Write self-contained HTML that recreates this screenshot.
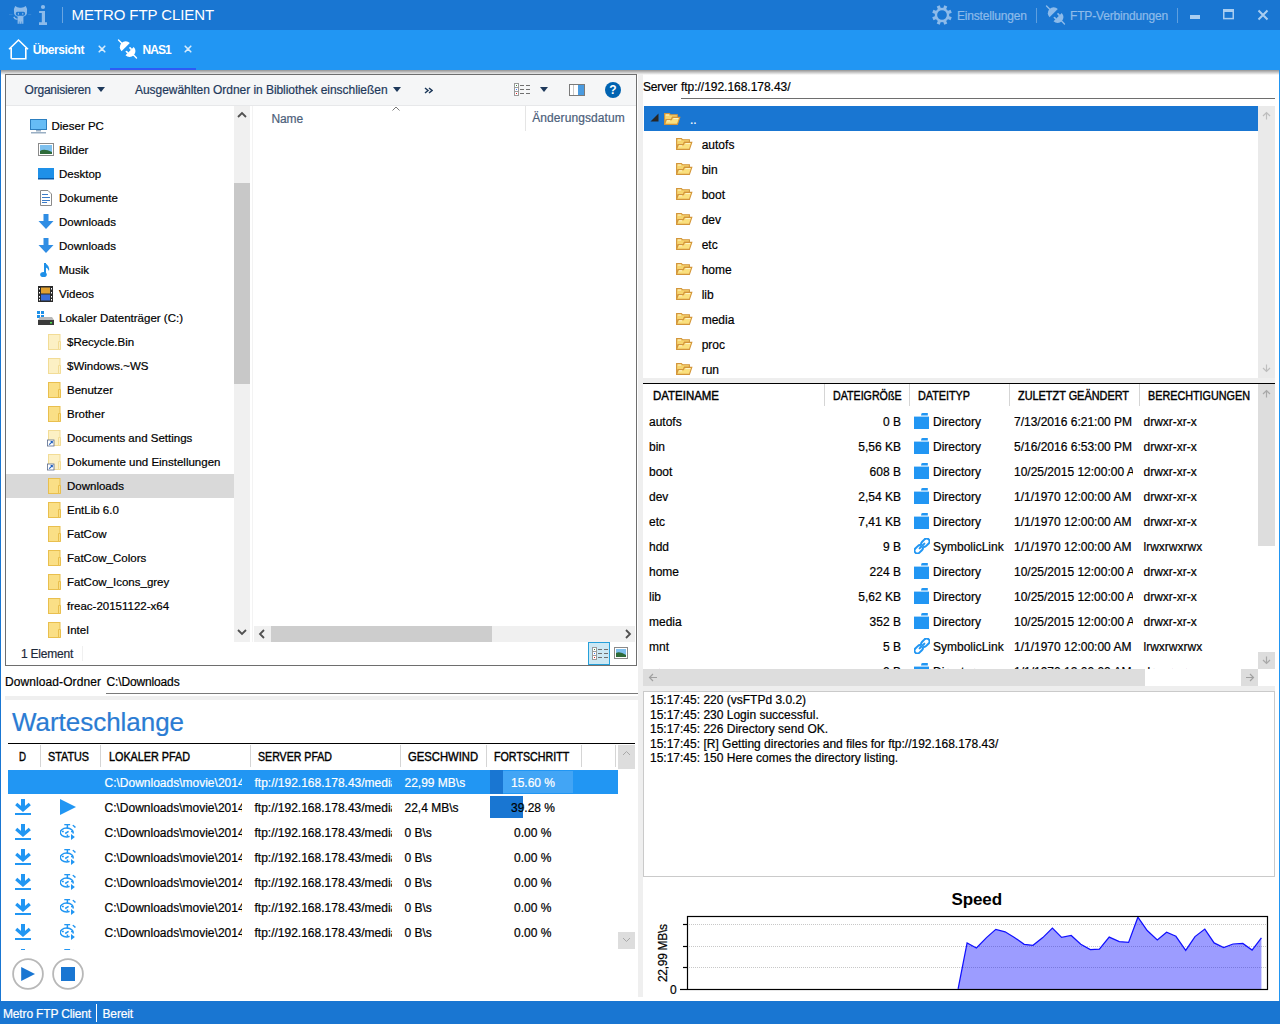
<!DOCTYPE html>
<html><head><meta charset="utf-8"><title>Metro FTP Client</title>
<style>
html,body{margin:0;padding:0;}
body{width:1280px;height:1024px;overflow:hidden;position:relative;background:#fff;font-family:"Liberation Sans",sans-serif;}
.t{position:absolute;white-space:nowrap;-webkit-text-stroke:0.2px currentColor;}
.r{position:absolute;}
</style></head><body>

<div class="r" style="left:0px;top:0px;width:1280px;height:30px;background:#1976D2;"></div>
<svg class="r" style="left:8px;top:2px;" width="44" height="26" viewBox="0 0 44 26"><g fill="#8DBBEA">
<path d="M6 9.6 Q5.6 6.4 7.2 4 Q9.4 5.9 12.5 5.7 Q15.6 5.9 17.8 4 Q19.4 6.4 19 9.6 Q19.6 15 12.5 15.2 Q5.4 15 6 9.6 Z"/>
<path d="M9.6 15 H15.4 V21.8 H14.1 V19.5 H13.6 V21.8 H11.4 V19.5 H10.9 V21.8 H9.6 Z"/>
<path d="M5.2 15.2 Q6.8 18.3 9.8 17.6 V16.6 Q7.5 17 6.3 14.6 Z"/>
<circle cx="35" cy="5" r="2.1"/>
<path d="M31.1 9.1 H37 V20.3 H39 V22.9 H31 V20.3 H33.8 V11.1 H31.1 Z"/>
</g>
<rect x="7.8" y="9.8" width="9.3" height="3.9" rx="1.6" fill="#1976D2"/>
<g fill="#8DBBEA"><ellipse cx="10.4" cy="11.8" rx="0.6" ry="1.1"/><ellipse cx="14.8" cy="11.8" rx="0.6" ry="1.1"/></g>
<path d="M1 12.6 H4.6 M20.2 12.6 H23.2" stroke="#8DBBEA" stroke-width="0.7" opacity="0.35"/></svg>
<div class="r" style="left:62px;top:7px;width:1px;height:16px;background:rgba(255,255,255,0.35);"></div>
<div class="t " style="left:71.5px;top:7px;font-size:15px;line-height:15px;color:#fff;letter-spacing:-0.088px;-webkit-text-stroke:0;">METRO FTP CLIENT</div>
<svg class="r" style="left:932px;top:5px;" width="20" height="20" viewBox="0 0 20 20"><g transform="translate(10,10)" fill="#8DBBEA"><rect x="-1.6" y="-9.9" width="3.2" height="4.5" transform="rotate(22.5)"/><rect x="-1.6" y="-9.9" width="3.2" height="4.5" transform="rotate(67.5)"/><rect x="-1.6" y="-9.9" width="3.2" height="4.5" transform="rotate(112.5)"/><rect x="-1.6" y="-9.9" width="3.2" height="4.5" transform="rotate(157.5)"/><rect x="-1.6" y="-9.9" width="3.2" height="4.5" transform="rotate(202.5)"/><rect x="-1.6" y="-9.9" width="3.2" height="4.5" transform="rotate(247.5)"/><rect x="-1.6" y="-9.9" width="3.2" height="4.5" transform="rotate(292.5)"/><rect x="-1.6" y="-9.9" width="3.2" height="4.5" transform="rotate(337.5)"/><circle r="6.05" fill="none" stroke="#8DBBEA" stroke-width="2.4"/></g></svg>
<div class="t " style="left:957px;top:10px;font-size:12px;line-height:12px;color:#8DBBEA;letter-spacing:-0.181px;">Einstellungen</div>
<div class="r" style="left:1036px;top:8px;width:1px;height:15px;background:rgba(255,255,255,0.3);"></div>
<svg class="r" style="left:1040px;top:0px;" width="32" height="30" viewBox="0 0 32 30"><g fill="#8DBBEA" transform="translate(15.5,15) rotate(45)">
<rect x="-13.4" y="-0.7" width="6" height="1.4" rx="0.7"/>
<path d="M-2.6 -5.85 A5.85 5.85 0 0 0 -2.6 5.85 Z"/>
<path d="M3 -5.85 A5.85 5.85 0 0 1 3 5.85 Z"/>
<rect x="0.2" y="-3.4" width="3.2" height="1.7" rx="0.8"/>
<rect x="0.2" y="1.7" width="3.2" height="1.7" rx="0.8"/>
<rect x="7.6" y="-0.7" width="5.8" height="1.4" rx="0.7"/>
</g></svg>
<div class="t " style="left:1070px;top:10px;font-size:12px;line-height:12px;color:#8DBBEA;letter-spacing:-0.171px;">FTP-Verbindungen</div>
<div class="r" style="left:1177px;top:8px;width:1px;height:15px;background:rgba(255,255,255,0.3);"></div>
<div class="r" style="left:1190px;top:15px;width:10px;height:4px;background:#A9CDF0;"></div>
<svg class="r" style="left:1223px;top:9px;" width="11" height="11" viewBox="0 0 11 11"><rect x="0.75" y="1" width="9.5" height="8.6" fill="none" stroke="#A9CDF0" stroke-width="1.5"/><rect x="0" y="0" width="11" height="3" fill="#A9CDF0"/></svg>
<svg class="r" style="left:1257px;top:9px;" width="12" height="12" viewBox="0 0 12 12"><path d="M1.5 1.5 L10.5 10.5 M10.5 1.5 L1.5 10.5" stroke="#A9CDF0" stroke-width="2"/></svg>
<div class="r" style="left:0px;top:30px;width:1280px;height:40px;background:#2196F3;"></div>
<svg class="r" style="left:8px;top:38px;" width="21" height="22" viewBox="0 0 21 22"><path d="M3.2 20.8 V10 M17.8 10 V20.8 H3.2 M1 11.2 L10.5 2 L20 11.2" fill="none" stroke="#fff" stroke-width="1.6"/></svg>
<div class="t " style="left:32.8px;top:44px;font-size:12px;line-height:12px;color:#fff;font-weight:bold;-webkit-text-stroke:0;letter-spacing:-0.461px;">Übersicht</div>
<svg class="r" style="left:98px;top:45px;" width="8" height="8" viewBox="0 0 8 8"><path d="M1.2 1.2 L6.8 6.8 M6.8 1.2 L1.2 6.8" stroke="#D6EBFC" stroke-width="1.6" stroke-linecap="round"/></svg>
<svg class="r" style="left:112px;top:34px;" width="32" height="30" viewBox="0 0 32 30"><g fill="#fff" transform="translate(15.5,15) rotate(45)">
<rect x="-13.4" y="-0.7" width="6" height="1.4" rx="0.7"/>
<path d="M-2.6 -5.85 A5.85 5.85 0 0 0 -2.6 5.85 Z"/>
<path d="M3 -5.85 A5.85 5.85 0 0 1 3 5.85 Z"/>
<rect x="0.2" y="-3.4" width="3.2" height="1.7" rx="0.8"/>
<rect x="0.2" y="1.7" width="3.2" height="1.7" rx="0.8"/>
<rect x="7.6" y="-0.7" width="5.8" height="1.4" rx="0.7"/>
</g></svg>
<div class="t " style="left:142.5px;top:44px;font-size:12px;line-height:12px;color:#fff;font-weight:bold;-webkit-text-stroke:0;letter-spacing:-0.978px;">NAS1</div>
<svg class="r" style="left:184px;top:45px;" width="8" height="8" viewBox="0 0 8 8"><path d="M1.2 1.2 L6.8 6.8 M6.8 1.2 L1.2 6.8" stroke="#D6EBFC" stroke-width="1.6" stroke-linecap="round"/></svg>
<div class="r" style="left:110px;top:68px;width:86px;height:2px;background:#2D5BF5;"></div>
<div class="r" style="left:0px;top:70px;width:1px;height:931px;background:#1976D2;"></div>
<div class="r" style="left:1279px;top:70px;width:1px;height:931px;background:#2196F3;"></div>
<div class="r" style="left:1px;top:70px;width:1278px;height:5px;background:linear-gradient(rgba(0,0,0,0.42),rgba(0,0,0,0));"></div>
<div class="r" style="left:638px;top:74px;width:5px;height:923px;background:#EFEFEF;"></div>
<div class="r" style="left:5px;top:696px;width:633px;height:4px;background:#EFEFEF;"></div>
<div class="r" style="left:5px;top:74px;width:632px;height:592px;background:#fff;box-sizing:border-box;border:1px solid #6E6E6E;"></div>
<div class="r" style="left:6px;top:75px;width:630px;height:30px;background:#F5F6F7;"></div>
<div class="r" style="left:6px;top:105px;width:630px;height:1px;background:#E7E8EA;"></div>
<div class="t " style="left:24.6px;top:84px;font-size:12px;line-height:12px;color:#1E395B;letter-spacing:-0.225px;">Organisieren</div>
<svg class="r" style="left:97px;top:87px;" width="8" height="5" viewBox="0 0 8 5"><path d="M0 0 H8 L4 5 Z" fill="#1E395B"/></svg>
<div class="t " style="left:135px;top:84px;font-size:12px;line-height:12px;color:#1E395B;letter-spacing:-0.050px;">Ausgewählten Ordner in Bibliothek einschließen</div>
<svg class="r" style="left:393px;top:87px;" width="8" height="5" viewBox="0 0 8 5"><path d="M0 0 H8 L4 5 Z" fill="#1E395B"/></svg>
<svg class="r" style="left:424px;top:87px;" width="9" height="7" viewBox="0 0 9 7"><path d="M1 1 L4 3.5 L1 6 M5 1 L8 3.5 L5 6" fill="none" stroke="#1E395B" stroke-width="1.5"/></svg>
<svg class="r" style="left:514px;top:83px;" width="16" height="13" viewBox="0 0 16 13"><g fill="#fff" stroke="#9A9A9A" stroke-width="1"><rect x="0.5" y="0.5" width="4" height="4"/><rect x="0.5" y="4.5" width="4" height="4"/><rect x="0.5" y="8.5" width="4" height="4"/></g>
<rect x="2" y="2" width="1" height="1" fill="#3C8C3C"/><rect x="2" y="6" width="1" height="1" fill="#3C7CFC"/><rect x="2" y="10" width="1" height="1" fill="#E02020"/>
<g fill="#707070"><rect x="6" y="2" width="4" height="1"/><rect x="12" y="2" width="4" height="1"/><rect x="6" y="6" width="4" height="1"/><rect x="12" y="6" width="4" height="1"/><rect x="6" y="10" width="4" height="1"/><rect x="12" y="10" width="4" height="1"/></g></svg>
<svg class="r" style="left:540px;top:87px;" width="8" height="5" viewBox="0 0 8 5"><path d="M0 0 H8 L4 5 Z" fill="#1E395B"/></svg>
<svg class="r" style="left:569px;top:84px;" width="16" height="12" viewBox="0 0 16 12"><rect x="0.5" y="0.5" width="15" height="11" fill="#fff" stroke="#7A7A7A"/><rect x="4" y="1" width="1" height="10" fill="#C8C8C8"/><rect x="9" y="1" width="6" height="10" fill="#4A9BE0"/></svg>
<svg class="r" style="left:605px;top:82px;" width="16" height="16" viewBox="0 0 16 16"><circle cx="8" cy="8" r="8" fill="#0063B1"/><text x="8" y="12.3" text-anchor="middle" font-family="Liberation Sans" font-weight="bold" font-size="12" fill="#fff">?</text></svg>
<div class="r" style="left:6px;top:474px;width:228px;height:24px;background:#D9D9D9;"></div>
<svg class="r" style="left:30px;top:118px;" width="17" height="16" viewBox="0 0 17 16"><rect x="0.5" y="1.5" width="16" height="10" fill="#3AA0E8" stroke="#2C7FC0" stroke-width="1"/><rect x="1" y="2" width="15" height="9" fill="#66BCF5"/><rect x="6" y="12" width="5" height="1.5" fill="#9AAFC4"/><rect x="1" y="14" width="15" height="1.5" fill="#9AAFC4"/></svg>
<div class="t " style="left:51.5px;top:121px;font-size:11.5px;line-height:11.5px;color:#000;">Dieser PC</div>
<svg class="r" style="left:38px;top:143px;" width="16" height="14" viewBox="0 0 16 14"><rect x="0.5" y="0.5" width="15" height="12" fill="#fff" stroke="#8A8A8A"/><rect x="2" y="2" width="12" height="9" fill="#7EC0EE"/><path d="M2 8 Q6 5 14 9 V11 H2 Z" fill="#2E6B3A"/></svg>
<div class="t " style="left:59px;top:145px;font-size:11.5px;line-height:11.5px;color:#000;">Bilder</div>
<svg class="r" style="left:38px;top:167px;" width="16" height="14" viewBox="0 0 16 14"><rect x="0" y="1" width="16" height="11" fill="#1E90E8"/><rect x="0" y="11" width="16" height="1.5" fill="#0A5AA8"/></svg>
<div class="t " style="left:59px;top:169px;font-size:11.5px;line-height:11.5px;color:#000;">Desktop</div>
<svg class="r" style="left:40px;top:190px;" width="12" height="16" viewBox="0 0 12 16"><path d="M0.5 0.5 H8 L11.5 4 V15.5 H0.5 Z" fill="#fff" stroke="#8A8A8A"/><g fill="#3C7CC8"><rect x="2" y="4" width="6" height="1"/><rect x="2" y="7" width="8" height="1"/><rect x="2" y="10" width="8" height="1"/><rect x="2" y="12" width="5" height="1"/></g></svg>
<div class="t " style="left:59px;top:193px;font-size:11.5px;line-height:11.5px;color:#000;">Dokumente</div>
<svg class="r" style="left:38px;top:214px;" width="16" height="16" viewBox="0 0 16 16"><path d="M5.5 0 H10.5 V7 H15.5 L8 15 L0.5 7 H5.5 Z" fill="#2F8DE4"/></svg>
<div class="t " style="left:59px;top:217px;font-size:11.5px;line-height:11.5px;color:#000;">Downloads</div>
<svg class="r" style="left:38px;top:238px;" width="16" height="16" viewBox="0 0 16 16"><path d="M5.5 0 H10.5 V7 H15.5 L8 15 L0.5 7 H5.5 Z" fill="#2F8DE4"/></svg>
<div class="t " style="left:59px;top:241px;font-size:11.5px;line-height:11.5px;color:#000;">Downloads</div>
<svg class="r" style="left:40px;top:262px;" width="12" height="16" viewBox="0 0 12 16"><path d="M5 1 V12" stroke="#1E90E8" stroke-width="2"/><ellipse cx="3.5" cy="12.5" rx="3.3" ry="2.6" fill="#1E90E8"/><path d="M5 1 Q10 4 9 9 Q8 6 5 5 Z" fill="#1E90E8"/></svg>
<div class="t " style="left:59px;top:265px;font-size:11.5px;line-height:11.5px;color:#000;">Musik</div>
<svg class="r" style="left:38px;top:286px;" width="15" height="16" viewBox="0 0 15 16"><rect x="0" y="0" width="15" height="16" fill="#2A2A2A"/><rect x="3" y="1.5" width="9" height="6" fill="#E0A030"/><rect x="3" y="8.5" width="9" height="6" fill="#3A6ED8"/><g fill="#fff"><rect x="1" y="2" width="1" height="1.5"/><rect x="1" y="6" width="1" height="1.5"/><rect x="1" y="10" width="1" height="1.5"/><rect x="1" y="13" width="1" height="1.5"/><rect x="13" y="2" width="1" height="1.5"/><rect x="13" y="6" width="1" height="1.5"/><rect x="13" y="10" width="1" height="1.5"/><rect x="13" y="13" width="1" height="1.5"/></g></svg>
<div class="t " style="left:59px;top:289px;font-size:11.5px;line-height:11.5px;color:#000;">Videos</div>
<svg class="r" style="left:37px;top:310px;" width="17" height="16" viewBox="0 0 17 16"><g fill="#1E90E8"><rect x="0" y="1" width="3" height="3"/><rect x="4" y="1" width="3" height="3"/><rect x="0" y="5" width="3" height="3"/><rect x="4" y="5" width="3" height="3"/></g><path d="M1 10 L3 7 H15 L17 10 Z" fill="#B8B8B8"/><rect x="1" y="10" width="16" height="5" fill="#3A3A3A"/><rect x="13" y="12" width="2" height="1.5" fill="#4CE04C"/></svg>
<div class="t " style="left:59px;top:313px;font-size:11.5px;line-height:11.5px;color:#000;">Lokaler Datenträger (C:)</div>
<svg class="r" style="left:48px;top:334px;overflow:visible;" width="14" height="17" viewBox="0 0 14 17"><rect x="0.5" y="0.5" width="11.5" height="15" fill="#FCF0C4" stroke="#F2DC96" stroke-width="1"/><path d="M12.5 7.5 H10.5 V15.5 H12.5 Z" fill="#FCF0C4" stroke="#F2DC96" stroke-width="1"/></svg>
<div class="t " style="left:67px;top:337px;font-size:11.5px;line-height:11.5px;color:#000;">$Recycle.Bin</div>
<svg class="r" style="left:48px;top:358px;overflow:visible;" width="14" height="17" viewBox="0 0 14 17"><rect x="0.5" y="0.5" width="11.5" height="15" fill="#FCF0C4" stroke="#F2DC96" stroke-width="1"/><path d="M12.5 7.5 H10.5 V15.5 H12.5 Z" fill="#FCF0C4" stroke="#F2DC96" stroke-width="1"/></svg>
<div class="t " style="left:67px;top:361px;font-size:11.5px;line-height:11.5px;color:#000;">$Windows.~WS</div>
<svg class="r" style="left:48px;top:382px;overflow:visible;" width="14" height="17" viewBox="0 0 14 17"><rect x="0.5" y="0.5" width="11.5" height="15" fill="#FADF86" stroke="#E9BF4E" stroke-width="1"/><path d="M12.5 7.5 H10.5 V15.5 H12.5 Z" fill="#FADF86" stroke="#E9BF4E" stroke-width="1"/></svg>
<div class="t " style="left:67px;top:385px;font-size:11.5px;line-height:11.5px;color:#000;">Benutzer</div>
<svg class="r" style="left:48px;top:406px;overflow:visible;" width="14" height="17" viewBox="0 0 14 17"><rect x="0.5" y="0.5" width="11.5" height="15" fill="#FADF86" stroke="#E9BF4E" stroke-width="1"/><path d="M12.5 7.5 H10.5 V15.5 H12.5 Z" fill="#FADF86" stroke="#E9BF4E" stroke-width="1"/></svg>
<div class="t " style="left:67px;top:409px;font-size:11.5px;line-height:11.5px;color:#000;">Brother</div>
<svg class="r" style="left:48px;top:430px;overflow:visible;" width="14" height="17" viewBox="0 0 14 17"><rect x="0.5" y="0.5" width="11.5" height="15" fill="#FCF0C4" stroke="#F2DC96" stroke-width="1"/><path d="M12.5 7.5 H10.5 V15.5 H12.5 Z" fill="#FCF0C4" stroke="#F2DC96" stroke-width="1"/><rect x="-0.5" y="10" width="6.5" height="6" fill="#fff" stroke="#5A6A8A" stroke-width="0.8"/><path d="M1.2 14.6 L4 11.8 M2.6 11.5 H4.3 V13.2" stroke="#1C5FC0" stroke-width="1.1" fill="none"/></svg>
<div class="t " style="left:67px;top:433px;font-size:11.5px;line-height:11.5px;color:#000;">Documents and Settings</div>
<svg class="r" style="left:48px;top:454px;overflow:visible;" width="14" height="17" viewBox="0 0 14 17"><rect x="0.5" y="0.5" width="11.5" height="15" fill="#FCF0C4" stroke="#F2DC96" stroke-width="1"/><path d="M12.5 7.5 H10.5 V15.5 H12.5 Z" fill="#FCF0C4" stroke="#F2DC96" stroke-width="1"/><rect x="-0.5" y="10" width="6.5" height="6" fill="#fff" stroke="#5A6A8A" stroke-width="0.8"/><path d="M1.2 14.6 L4 11.8 M2.6 11.5 H4.3 V13.2" stroke="#1C5FC0" stroke-width="1.1" fill="none"/></svg>
<div class="t " style="left:67px;top:457px;font-size:11.5px;line-height:11.5px;color:#000;">Dokumente und Einstellungen</div>
<svg class="r" style="left:48px;top:478px;overflow:visible;" width="14" height="17" viewBox="0 0 14 17"><rect x="0.5" y="0.5" width="11.5" height="15" fill="#FADF86" stroke="#E9BF4E" stroke-width="1"/><path d="M12.5 7.5 H10.5 V15.5 H12.5 Z" fill="#FADF86" stroke="#E9BF4E" stroke-width="1"/></svg>
<div class="t " style="left:67px;top:481px;font-size:11.5px;line-height:11.5px;color:#000;">Downloads</div>
<svg class="r" style="left:48px;top:502px;overflow:visible;" width="14" height="17" viewBox="0 0 14 17"><rect x="0.5" y="0.5" width="11.5" height="15" fill="#FADF86" stroke="#E9BF4E" stroke-width="1"/><path d="M12.5 7.5 H10.5 V15.5 H12.5 Z" fill="#FADF86" stroke="#E9BF4E" stroke-width="1"/></svg>
<div class="t " style="left:67px;top:505px;font-size:11.5px;line-height:11.5px;color:#000;">EntLib 6.0</div>
<svg class="r" style="left:48px;top:526px;overflow:visible;" width="14" height="17" viewBox="0 0 14 17"><rect x="0.5" y="0.5" width="11.5" height="15" fill="#FADF86" stroke="#E9BF4E" stroke-width="1"/><path d="M12.5 7.5 H10.5 V15.5 H12.5 Z" fill="#FADF86" stroke="#E9BF4E" stroke-width="1"/></svg>
<div class="t " style="left:67px;top:529px;font-size:11.5px;line-height:11.5px;color:#000;">FatCow</div>
<svg class="r" style="left:48px;top:550px;overflow:visible;" width="14" height="17" viewBox="0 0 14 17"><rect x="0.5" y="0.5" width="11.5" height="15" fill="#FADF86" stroke="#E9BF4E" stroke-width="1"/><path d="M12.5 7.5 H10.5 V15.5 H12.5 Z" fill="#FADF86" stroke="#E9BF4E" stroke-width="1"/></svg>
<div class="t " style="left:67px;top:553px;font-size:11.5px;line-height:11.5px;color:#000;">FatCow_Colors</div>
<svg class="r" style="left:48px;top:574px;overflow:visible;" width="14" height="17" viewBox="0 0 14 17"><rect x="0.5" y="0.5" width="11.5" height="15" fill="#FADF86" stroke="#E9BF4E" stroke-width="1"/><path d="M12.5 7.5 H10.5 V15.5 H12.5 Z" fill="#FADF86" stroke="#E9BF4E" stroke-width="1"/></svg>
<div class="t " style="left:67px;top:577px;font-size:11.5px;line-height:11.5px;color:#000;">FatCow_Icons_grey</div>
<svg class="r" style="left:48px;top:598px;overflow:visible;" width="14" height="17" viewBox="0 0 14 17"><rect x="0.5" y="0.5" width="11.5" height="15" fill="#FADF86" stroke="#E9BF4E" stroke-width="1"/><path d="M12.5 7.5 H10.5 V15.5 H12.5 Z" fill="#FADF86" stroke="#E9BF4E" stroke-width="1"/></svg>
<div class="t " style="left:67px;top:601px;font-size:11.5px;line-height:11.5px;color:#000;">freac-20151122-x64</div>
<svg class="r" style="left:48px;top:622px;overflow:visible;" width="14" height="17" viewBox="0 0 14 17"><rect x="0.5" y="0.5" width="11.5" height="15" fill="#FADF86" stroke="#E9BF4E" stroke-width="1"/><path d="M12.5 7.5 H10.5 V15.5 H12.5 Z" fill="#FADF86" stroke="#E9BF4E" stroke-width="1"/></svg>
<div class="t " style="left:67px;top:625px;font-size:11.5px;line-height:11.5px;color:#000;">Intel</div>
<div class="r" style="left:234px;top:106px;width:16px;height:536px;background:#F0F0F0;"></div>
<div class="r" style="left:234px;top:183px;width:16px;height:201px;background:#C8C8C8;"></div>
<svg class="r" style="left:237px;top:111px;" width="10" height="7" viewBox="0 0 10 7"><path d="M1 6 L5 2 L9 6" fill="none" stroke="#505050" stroke-width="1.8"/></svg>
<svg class="r" style="left:237px;top:629px;" width="10" height="7" viewBox="0 0 10 7"><path d="M1 1 L5 5 L9 1" fill="none" stroke="#505050" stroke-width="1.8"/></svg>
<div class="r" style="left:252px;top:106px;width:1px;height:536px;background:#F3F3F3;"></div>
<div class="t " style="left:271.5px;top:113px;font-size:12px;line-height:12px;color:#4C607A;letter-spacing:-0.128px;">Name</div>
<svg class="r" style="left:392px;top:105px;" width="8" height="6" viewBox="0 0 8 6"><path d="M0.5 5.5 L4 2 L7.5 5.5" fill="none" stroke="#7A7A7A" stroke-width="1"/></svg>
<div class="r" style="left:525px;top:106px;width:1px;height:25px;background:#E5E5E5;"></div>
<div class="t " style="left:532.3px;top:112px;font-size:12px;line-height:12px;color:#4C607A;letter-spacing:0.072px;">Änderungsdatum</div>
<div class="r" style="left:254px;top:626px;width:381px;height:16px;background:#F0F0F0;"></div>
<div class="r" style="left:271px;top:626px;width:221px;height:16px;background:#CDCDCD;"></div>
<svg class="r" style="left:258px;top:629px;" width="8" height="10" viewBox="0 0 8 10"><path d="M6 1 L2 5 L6 9" fill="none" stroke="#505050" stroke-width="1.8"/></svg>
<svg class="r" style="left:624px;top:629px;" width="8" height="10" viewBox="0 0 8 10"><path d="M2 1 L6 5 L2 9" fill="none" stroke="#505050" stroke-width="1.8"/></svg>
<div class="t " style="left:21px;top:648px;font-size:12px;line-height:12px;color:#1E2A3A;letter-spacing:-0.226px;">1 Element</div>
<div class="r" style="left:82px;top:646px;width:1px;height:15px;background:#F0F0F0;"></div>
<div class="r" style="left:588px;top:642px;width:22px;height:23px;background:#CCE8F4;box-sizing:border-box;border:1px solid #26A0DA;"></div>
<svg class="r" style="left:592px;top:647px;" width="16" height="13" viewBox="0 0 16 13"><g fill="#fff" stroke="#9A9A9A" stroke-width="1"><rect x="0.5" y="0.5" width="4" height="4"/><rect x="0.5" y="4.5" width="4" height="4"/><rect x="0.5" y="8.5" width="4" height="4"/></g>
<rect x="2" y="2" width="1" height="1" fill="#3C8C3C"/><rect x="2" y="6" width="1" height="1" fill="#3C7CFC"/><rect x="2" y="10" width="1" height="1" fill="#E02020"/>
<g fill="#707070"><rect x="6" y="2" width="4" height="1"/><rect x="12" y="2" width="4" height="1"/><rect x="6" y="6" width="4" height="1"/><rect x="12" y="6" width="4" height="1"/><rect x="6" y="10" width="4" height="1"/><rect x="12" y="10" width="4" height="1"/></g></svg>
<svg class="r" style="left:614px;top:647px;" width="14" height="12" viewBox="0 0 14 12"><rect x="0.5" y="0.5" width="13" height="11" fill="#fff" stroke="#8A8A8A"/><rect x="2" y="2" width="10" height="8" fill="#7EC0EE"/><path d="M2 6 Q6 4 12 8 V10 H2 Z" fill="#2E6B3A"/></svg>
<div class="t " style="left:5px;top:676px;font-size:12px;line-height:12px;color:#000;letter-spacing:0.086px;">Download-Ordner</div>
<div class="t " style="left:106.5px;top:676px;font-size:12px;line-height:12px;color:#000;letter-spacing:-0.142px;">C:\Downloads</div>
<div class="r" style="left:106px;top:693px;width:532px;height:1px;background:#7A7A7A;"></div>
<div class="t " style="left:12px;top:709px;font-size:26px;line-height:26px;color:#2B7CD3;letter-spacing:-0.035px;">Warteschlange</div>
<div class="r" style="left:8px;top:743px;width:627px;height:1px;background:#000;"></div>
<div class="t " style="left:18.5px;top:751px;font-size:12px;line-height:12px;color:#000;transform:scaleX(0.8077);transform-origin:0 0;-webkit-text-stroke:0.4px #000;">D</div>
<div class="t " style="left:48px;top:751px;font-size:12px;line-height:12px;color:#000;transform:scaleX(0.8999);transform-origin:0 0;-webkit-text-stroke:0.4px #000;">STATUS</div>
<div class="t " style="left:108.5px;top:751px;font-size:12px;line-height:12px;color:#000;transform:scaleX(0.8996);transform-origin:0 0;-webkit-text-stroke:0.4px #000;">LOKALER PFAD</div>
<div class="t " style="left:258px;top:751px;font-size:12px;line-height:12px;color:#000;transform:scaleX(0.8829);transform-origin:0 0;-webkit-text-stroke:0.4px #000;">SERVER PFAD</div>
<div class="t " style="left:408px;top:751px;font-size:12px;line-height:12px;color:#000;transform:scaleX(0.9375);transform-origin:0 0;-webkit-text-stroke:0.4px #000;">GESCHWIND</div>
<div class="t " style="left:494.3px;top:751px;font-size:12px;line-height:12px;color:#000;transform:scaleX(0.8917);transform-origin:0 0;-webkit-text-stroke:0.4px #000;">FORTSCHRITT</div>
<div class="r" style="left:40px;top:745px;width:1px;height:22px;background:#D5D5D5;"></div>
<div class="r" style="left:100px;top:745px;width:1px;height:22px;background:#D5D5D5;"></div>
<div class="r" style="left:250px;top:745px;width:1px;height:22px;background:#D5D5D5;"></div>
<div class="r" style="left:400px;top:745px;width:1px;height:22px;background:#D5D5D5;"></div>
<div class="r" style="left:486px;top:745px;width:1px;height:22px;background:#D5D5D5;"></div>
<div class="r" style="left:581px;top:745px;width:1px;height:22px;background:#D5D5D5;"></div>
<div class="r" style="left:615px;top:745px;width:1px;height:22px;background:#D5D5D5;"></div>
<div class="r" style="left:618px;top:745px;width:17px;height:24px;background:#DDDDDD;"></div>
<svg class="r" style="left:622px;top:750px;" width="9" height="6" viewBox="0 0 9 6"><path d="M1 5 L4.5 1.5 L8 5" fill="none" stroke="#A8A8A8" stroke-width="1"/></svg>
<div class="r" style="left:618px;top:932px;width:17px;height:17px;background:#DDDDDD;"></div>
<svg class="r" style="left:622px;top:937px;" width="9" height="6" viewBox="0 0 9 6"><path d="M1 1 L4.5 4.5 L8 1" fill="none" stroke="#A8A8A8" stroke-width="1"/></svg>
<div class="r" style="left:8px;top:770px;width:610px;height:24px;background:#2196F3;"></div>
<div class="r" style="left:490px;top:770px;width:13px;height:24px;background:#1976D2;"></div>
<div class="r" style="left:503px;top:771px;width:70px;height:22px;background:#42A5F5;"></div>
<div class="r" style="left:104px;top:770px;width:138px;height:25px;overflow:hidden;">
<div class="t " style="left:0.5px;top:7px;font-size:12px;line-height:12px;color:#fff;">C:\Downloads\movie\2014</div>
</div>
<div class="r" style="left:254px;top:770px;width:138px;height:25px;overflow:hidden;">
<div class="t " style="left:0.5px;top:7px;font-size:12px;line-height:12px;color:#fff;">ftp://192.168.178.43/media</div>
</div>
<div class="t " style="left:404.5px;top:777px;font-size:12px;line-height:12px;color:#fff;">22,99 MB\s</div>
<div class="t " style="left:511px;top:777px;font-size:12px;line-height:12px;color:#fff;">15.60 %</div>
<svg class="r" style="left:15px;top:799px;" width="16" height="16" viewBox="0 0 16 16"><rect x="6" y="0" width="4" height="10" fill="#2196F3"/><path d="M1.2 5 L8 10.8 L14.8 5" fill="none" stroke="#2196F3" stroke-width="3.2"/><rect x="0" y="14" width="16" height="2" fill="#2196F3"/></svg>
<svg class="r" style="left:60px;top:799px;" width="16" height="16" viewBox="0 0 16 16"><path d="M0 0 L16 8 L0 16 Z" fill="#2196F3"/></svg>
<div class="r" style="left:104px;top:795px;width:138px;height:25px;overflow:hidden;">
<div class="t " style="left:0.5px;top:7px;font-size:12px;line-height:12px;color:#000;">C:\Downloads\movie\2014</div>
</div>
<div class="r" style="left:254px;top:795px;width:138px;height:25px;overflow:hidden;">
<div class="t " style="left:0.5px;top:7px;font-size:12px;line-height:12px;color:#000;">ftp://192.168.178.43/media</div>
</div>
<div class="t " style="left:404.5px;top:802px;font-size:12px;line-height:12px;color:#000;">22,4 MB\s</div>
<div class="r" style="left:490px;top:796px;width:33px;height:22px;background:#1976D2;"></div>
<div class="t " style="left:511px;top:802px;font-size:12px;line-height:12px;color:#000;">39.28 %</div>
<svg class="r" style="left:15px;top:824px;" width="16" height="16" viewBox="0 0 16 16"><rect x="6" y="0" width="4" height="10" fill="#2196F3"/><path d="M1.2 5 L8 10.8 L14.8 5" fill="none" stroke="#2196F3" stroke-width="3.2"/><rect x="0" y="14" width="16" height="2" fill="#2196F3"/></svg>
<svg class="r" style="left:60px;top:824px;" width="16" height="16" viewBox="0 0 16 16"><g fill="none" stroke="#2196F3" stroke-width="1.5">
<path d="M9.6 12.4 A6.4 4.4 0 1 1 12.9 9.6"/>
<path d="M7.4 1 V4.8 M1.9 7.6 H3.8 M11 7.6 H12.9 M7.4 10.6 V12.4 M5.2 9.5 L8.6 7.4"/>
</g>
<g fill="#2196F3"><rect x="4.3" y="0" width="5.8" height="1.3"/><path d="M12.3 1.6 L13.4 0.8 L16 2.9 L14.9 3.9 Z"/><path d="M11 10 L14.9 13 L11 16 Z"/></g></svg>
<div class="r" style="left:104px;top:820px;width:138px;height:25px;overflow:hidden;">
<div class="t " style="left:0.5px;top:7px;font-size:12px;line-height:12px;color:#000;">C:\Downloads\movie\2014</div>
</div>
<div class="r" style="left:254px;top:820px;width:138px;height:25px;overflow:hidden;">
<div class="t " style="left:0.5px;top:7px;font-size:12px;line-height:12px;color:#000;">ftp://192.168.178.43/media</div>
</div>
<div class="t " style="left:404.5px;top:827px;font-size:12px;line-height:12px;color:#000;">0 B\s</div>
<div class="t " style="left:514px;top:827px;font-size:12px;line-height:12px;color:#000;">0.00 %</div>
<svg class="r" style="left:15px;top:849px;" width="16" height="16" viewBox="0 0 16 16"><rect x="6" y="0" width="4" height="10" fill="#2196F3"/><path d="M1.2 5 L8 10.8 L14.8 5" fill="none" stroke="#2196F3" stroke-width="3.2"/><rect x="0" y="14" width="16" height="2" fill="#2196F3"/></svg>
<svg class="r" style="left:60px;top:849px;" width="16" height="16" viewBox="0 0 16 16"><g fill="none" stroke="#2196F3" stroke-width="1.5">
<path d="M9.6 12.4 A6.4 4.4 0 1 1 12.9 9.6"/>
<path d="M7.4 1 V4.8 M1.9 7.6 H3.8 M11 7.6 H12.9 M7.4 10.6 V12.4 M5.2 9.5 L8.6 7.4"/>
</g>
<g fill="#2196F3"><rect x="4.3" y="0" width="5.8" height="1.3"/><path d="M12.3 1.6 L13.4 0.8 L16 2.9 L14.9 3.9 Z"/><path d="M11 10 L14.9 13 L11 16 Z"/></g></svg>
<div class="r" style="left:104px;top:845px;width:138px;height:25px;overflow:hidden;">
<div class="t " style="left:0.5px;top:7px;font-size:12px;line-height:12px;color:#000;">C:\Downloads\movie\2014</div>
</div>
<div class="r" style="left:254px;top:845px;width:138px;height:25px;overflow:hidden;">
<div class="t " style="left:0.5px;top:7px;font-size:12px;line-height:12px;color:#000;">ftp://192.168.178.43/media</div>
</div>
<div class="t " style="left:404.5px;top:852px;font-size:12px;line-height:12px;color:#000;">0 B\s</div>
<div class="t " style="left:514px;top:852px;font-size:12px;line-height:12px;color:#000;">0.00 %</div>
<svg class="r" style="left:15px;top:874px;" width="16" height="16" viewBox="0 0 16 16"><rect x="6" y="0" width="4" height="10" fill="#2196F3"/><path d="M1.2 5 L8 10.8 L14.8 5" fill="none" stroke="#2196F3" stroke-width="3.2"/><rect x="0" y="14" width="16" height="2" fill="#2196F3"/></svg>
<svg class="r" style="left:60px;top:874px;" width="16" height="16" viewBox="0 0 16 16"><g fill="none" stroke="#2196F3" stroke-width="1.5">
<path d="M9.6 12.4 A6.4 4.4 0 1 1 12.9 9.6"/>
<path d="M7.4 1 V4.8 M1.9 7.6 H3.8 M11 7.6 H12.9 M7.4 10.6 V12.4 M5.2 9.5 L8.6 7.4"/>
</g>
<g fill="#2196F3"><rect x="4.3" y="0" width="5.8" height="1.3"/><path d="M12.3 1.6 L13.4 0.8 L16 2.9 L14.9 3.9 Z"/><path d="M11 10 L14.9 13 L11 16 Z"/></g></svg>
<div class="r" style="left:104px;top:870px;width:138px;height:25px;overflow:hidden;">
<div class="t " style="left:0.5px;top:7px;font-size:12px;line-height:12px;color:#000;">C:\Downloads\movie\2014</div>
</div>
<div class="r" style="left:254px;top:870px;width:138px;height:25px;overflow:hidden;">
<div class="t " style="left:0.5px;top:7px;font-size:12px;line-height:12px;color:#000;">ftp://192.168.178.43/media</div>
</div>
<div class="t " style="left:404.5px;top:877px;font-size:12px;line-height:12px;color:#000;">0 B\s</div>
<div class="t " style="left:514px;top:877px;font-size:12px;line-height:12px;color:#000;">0.00 %</div>
<svg class="r" style="left:15px;top:899px;" width="16" height="16" viewBox="0 0 16 16"><rect x="6" y="0" width="4" height="10" fill="#2196F3"/><path d="M1.2 5 L8 10.8 L14.8 5" fill="none" stroke="#2196F3" stroke-width="3.2"/><rect x="0" y="14" width="16" height="2" fill="#2196F3"/></svg>
<svg class="r" style="left:60px;top:899px;" width="16" height="16" viewBox="0 0 16 16"><g fill="none" stroke="#2196F3" stroke-width="1.5">
<path d="M9.6 12.4 A6.4 4.4 0 1 1 12.9 9.6"/>
<path d="M7.4 1 V4.8 M1.9 7.6 H3.8 M11 7.6 H12.9 M7.4 10.6 V12.4 M5.2 9.5 L8.6 7.4"/>
</g>
<g fill="#2196F3"><rect x="4.3" y="0" width="5.8" height="1.3"/><path d="M12.3 1.6 L13.4 0.8 L16 2.9 L14.9 3.9 Z"/><path d="M11 10 L14.9 13 L11 16 Z"/></g></svg>
<div class="r" style="left:104px;top:895px;width:138px;height:25px;overflow:hidden;">
<div class="t " style="left:0.5px;top:7px;font-size:12px;line-height:12px;color:#000;">C:\Downloads\movie\2014</div>
</div>
<div class="r" style="left:254px;top:895px;width:138px;height:25px;overflow:hidden;">
<div class="t " style="left:0.5px;top:7px;font-size:12px;line-height:12px;color:#000;">ftp://192.168.178.43/media</div>
</div>
<div class="t " style="left:404.5px;top:902px;font-size:12px;line-height:12px;color:#000;">0 B\s</div>
<div class="t " style="left:514px;top:902px;font-size:12px;line-height:12px;color:#000;">0.00 %</div>
<svg class="r" style="left:15px;top:924px;" width="16" height="16" viewBox="0 0 16 16"><rect x="6" y="0" width="4" height="10" fill="#2196F3"/><path d="M1.2 5 L8 10.8 L14.8 5" fill="none" stroke="#2196F3" stroke-width="3.2"/><rect x="0" y="14" width="16" height="2" fill="#2196F3"/></svg>
<svg class="r" style="left:60px;top:924px;" width="16" height="16" viewBox="0 0 16 16"><g fill="none" stroke="#2196F3" stroke-width="1.5">
<path d="M9.6 12.4 A6.4 4.4 0 1 1 12.9 9.6"/>
<path d="M7.4 1 V4.8 M1.9 7.6 H3.8 M11 7.6 H12.9 M7.4 10.6 V12.4 M5.2 9.5 L8.6 7.4"/>
</g>
<g fill="#2196F3"><rect x="4.3" y="0" width="5.8" height="1.3"/><path d="M12.3 1.6 L13.4 0.8 L16 2.9 L14.9 3.9 Z"/><path d="M11 10 L14.9 13 L11 16 Z"/></g></svg>
<div class="r" style="left:104px;top:920px;width:138px;height:25px;overflow:hidden;">
<div class="t " style="left:0.5px;top:7px;font-size:12px;line-height:12px;color:#000;">C:\Downloads\movie\2014</div>
</div>
<div class="r" style="left:254px;top:920px;width:138px;height:25px;overflow:hidden;">
<div class="t " style="left:0.5px;top:7px;font-size:12px;line-height:12px;color:#000;">ftp://192.168.178.43/media</div>
</div>
<div class="t " style="left:404.5px;top:927px;font-size:12px;line-height:12px;color:#000;">0 B\s</div>
<div class="t " style="left:514px;top:927px;font-size:12px;line-height:12px;color:#000;">0.00 %</div>
<div class="r" style="left:0;top:945px;width:100px;height:5px;overflow:hidden;">
<svg class="r" style="left:15px;top:4px;" width="16" height="16" viewBox="0 0 16 16"><rect x="6" y="0" width="4" height="10" fill="#2196F3"/><path d="M1.2 5 L8 10.8 L14.8 5" fill="none" stroke="#2196F3" stroke-width="3.2"/><rect x="0" y="14" width="16" height="2" fill="#2196F3"/></svg>
<svg class="r" style="left:60px;top:4px;" width="16" height="16" viewBox="0 0 16 16"><g fill="none" stroke="#2196F3" stroke-width="1.5">
<path d="M9.6 12.4 A6.4 4.4 0 1 1 12.9 9.6"/>
<path d="M7.4 1 V4.8 M1.9 7.6 H3.8 M11 7.6 H12.9 M7.4 10.6 V12.4 M5.2 9.5 L8.6 7.4"/>
</g>
<g fill="#2196F3"><rect x="4.3" y="0" width="5.8" height="1.3"/><path d="M12.3 1.6 L13.4 0.8 L16 2.9 L14.9 3.9 Z"/><path d="M11 10 L14.9 13 L11 16 Z"/></g></svg>
</div>
<svg class="r" style="left:12px;top:958px;" width="32" height="32" viewBox="0 0 32 32"><circle cx="16" cy="16" r="14.9" fill="#fff" stroke="#B8B8B8" stroke-width="1.8"/><path d="M9.2 9 L23 16 L9.2 23 Z" fill="#1976D2"/></svg>
<svg class="r" style="left:52px;top:958px;" width="32" height="32" viewBox="0 0 32 32"><circle cx="16" cy="16" r="14.9" fill="#fff" stroke="#B8B8B8" stroke-width="1.8"/><rect x="9" y="9" width="14" height="14" fill="#1976D2"/></svg>
<div class="r" style="left:0px;top:1001px;width:1280px;height:23px;background:#1976D2;"></div>
<div class="t " style="left:3px;top:1008px;font-size:12px;line-height:12px;color:#fff;letter-spacing:-0.154px;">Metro FTP Client</div>
<div class="r" style="left:96px;top:1004px;width:1px;height:18px;background:#fff;"></div>
<div class="t " style="left:102.5px;top:1008px;font-size:12px;line-height:12px;color:#fff;letter-spacing:-0.142px;">Bereit</div>
<div class="t " style="left:643px;top:81px;font-size:12px;line-height:12px;color:#000;letter-spacing:-0.224px;">Server</div>
<div class="t " style="left:681px;top:81px;font-size:12px;line-height:12px;color:#000;letter-spacing:-0.028px;">ftp://192.168.178.43/</div>
<div class="r" style="left:681px;top:98px;width:594px;height:1px;background:#6E6E6E;"></div>
<div class="r" style="left:644px;top:106px;width:614px;height:25px;background:#1976D2;"></div>
<svg class="r" style="left:650px;top:113px;" width="9" height="9" viewBox="0 0 9 9"><path d="M8.5 0.5 V8.5 H0.5 Z" fill="#262626"/></svg>
<svg class="r" style="left:664px;top:113px;" width="17" height="13" viewBox="0 0 17 13"><path d="M0.6 0.6 H5.4 L6.6 1.8 H13.4 V4.4 H8.4 L7.5 6.6 H2.2 L0.6 11.4 Z" fill="#F6D56F" stroke="#D3953A" stroke-width="1.1"/>
<path d="M0.6 11.4 L2.2 6.6 H7.5 L8.4 4.4 H15.8 L13.4 11.4 Z" fill="#FAE07E" stroke="#D3953A" stroke-width="1.1"/>
<path d="M1.8 2 H5 M9.5 5.6 H14.3 M3 7.8 H6" stroke="#FFF8D8" stroke-width="0.9"/></svg>
<div class="t " style="left:690px;top:114px;font-size:12px;line-height:12px;color:#fff;">..</div>
<svg class="r" style="left:676px;top:138px;" width="17" height="13" viewBox="0 0 17 13"><path d="M0.6 0.6 H5.4 L6.6 1.8 H13.4 V4.4 H8.4 L7.5 6.6 H2.2 L0.6 11.4 Z" fill="#F6D56F" stroke="#D3953A" stroke-width="1.1"/>
<path d="M0.6 11.4 L2.2 6.6 H7.5 L8.4 4.4 H15.8 L13.4 11.4 Z" fill="#FAE07E" stroke="#D3953A" stroke-width="1.1"/>
<path d="M1.8 2 H5 M9.5 5.6 H14.3 M3 7.8 H6" stroke="#FFF8D8" stroke-width="0.9"/></svg>
<div class="t " style="left:701.7px;top:139px;font-size:12px;line-height:12px;color:#000;">autofs</div>
<svg class="r" style="left:676px;top:163px;" width="17" height="13" viewBox="0 0 17 13"><path d="M0.6 0.6 H5.4 L6.6 1.8 H13.4 V4.4 H8.4 L7.5 6.6 H2.2 L0.6 11.4 Z" fill="#F6D56F" stroke="#D3953A" stroke-width="1.1"/>
<path d="M0.6 11.4 L2.2 6.6 H7.5 L8.4 4.4 H15.8 L13.4 11.4 Z" fill="#FAE07E" stroke="#D3953A" stroke-width="1.1"/>
<path d="M1.8 2 H5 M9.5 5.6 H14.3 M3 7.8 H6" stroke="#FFF8D8" stroke-width="0.9"/></svg>
<div class="t " style="left:701.7px;top:164px;font-size:12px;line-height:12px;color:#000;">bin</div>
<svg class="r" style="left:676px;top:188px;" width="17" height="13" viewBox="0 0 17 13"><path d="M0.6 0.6 H5.4 L6.6 1.8 H13.4 V4.4 H8.4 L7.5 6.6 H2.2 L0.6 11.4 Z" fill="#F6D56F" stroke="#D3953A" stroke-width="1.1"/>
<path d="M0.6 11.4 L2.2 6.6 H7.5 L8.4 4.4 H15.8 L13.4 11.4 Z" fill="#FAE07E" stroke="#D3953A" stroke-width="1.1"/>
<path d="M1.8 2 H5 M9.5 5.6 H14.3 M3 7.8 H6" stroke="#FFF8D8" stroke-width="0.9"/></svg>
<div class="t " style="left:701.7px;top:189px;font-size:12px;line-height:12px;color:#000;">boot</div>
<svg class="r" style="left:676px;top:213px;" width="17" height="13" viewBox="0 0 17 13"><path d="M0.6 0.6 H5.4 L6.6 1.8 H13.4 V4.4 H8.4 L7.5 6.6 H2.2 L0.6 11.4 Z" fill="#F6D56F" stroke="#D3953A" stroke-width="1.1"/>
<path d="M0.6 11.4 L2.2 6.6 H7.5 L8.4 4.4 H15.8 L13.4 11.4 Z" fill="#FAE07E" stroke="#D3953A" stroke-width="1.1"/>
<path d="M1.8 2 H5 M9.5 5.6 H14.3 M3 7.8 H6" stroke="#FFF8D8" stroke-width="0.9"/></svg>
<div class="t " style="left:701.7px;top:214px;font-size:12px;line-height:12px;color:#000;">dev</div>
<svg class="r" style="left:676px;top:238px;" width="17" height="13" viewBox="0 0 17 13"><path d="M0.6 0.6 H5.4 L6.6 1.8 H13.4 V4.4 H8.4 L7.5 6.6 H2.2 L0.6 11.4 Z" fill="#F6D56F" stroke="#D3953A" stroke-width="1.1"/>
<path d="M0.6 11.4 L2.2 6.6 H7.5 L8.4 4.4 H15.8 L13.4 11.4 Z" fill="#FAE07E" stroke="#D3953A" stroke-width="1.1"/>
<path d="M1.8 2 H5 M9.5 5.6 H14.3 M3 7.8 H6" stroke="#FFF8D8" stroke-width="0.9"/></svg>
<div class="t " style="left:701.7px;top:239px;font-size:12px;line-height:12px;color:#000;">etc</div>
<svg class="r" style="left:676px;top:263px;" width="17" height="13" viewBox="0 0 17 13"><path d="M0.6 0.6 H5.4 L6.6 1.8 H13.4 V4.4 H8.4 L7.5 6.6 H2.2 L0.6 11.4 Z" fill="#F6D56F" stroke="#D3953A" stroke-width="1.1"/>
<path d="M0.6 11.4 L2.2 6.6 H7.5 L8.4 4.4 H15.8 L13.4 11.4 Z" fill="#FAE07E" stroke="#D3953A" stroke-width="1.1"/>
<path d="M1.8 2 H5 M9.5 5.6 H14.3 M3 7.8 H6" stroke="#FFF8D8" stroke-width="0.9"/></svg>
<div class="t " style="left:701.7px;top:264px;font-size:12px;line-height:12px;color:#000;">home</div>
<svg class="r" style="left:676px;top:288px;" width="17" height="13" viewBox="0 0 17 13"><path d="M0.6 0.6 H5.4 L6.6 1.8 H13.4 V4.4 H8.4 L7.5 6.6 H2.2 L0.6 11.4 Z" fill="#F6D56F" stroke="#D3953A" stroke-width="1.1"/>
<path d="M0.6 11.4 L2.2 6.6 H7.5 L8.4 4.4 H15.8 L13.4 11.4 Z" fill="#FAE07E" stroke="#D3953A" stroke-width="1.1"/>
<path d="M1.8 2 H5 M9.5 5.6 H14.3 M3 7.8 H6" stroke="#FFF8D8" stroke-width="0.9"/></svg>
<div class="t " style="left:701.7px;top:289px;font-size:12px;line-height:12px;color:#000;">lib</div>
<svg class="r" style="left:676px;top:313px;" width="17" height="13" viewBox="0 0 17 13"><path d="M0.6 0.6 H5.4 L6.6 1.8 H13.4 V4.4 H8.4 L7.5 6.6 H2.2 L0.6 11.4 Z" fill="#F6D56F" stroke="#D3953A" stroke-width="1.1"/>
<path d="M0.6 11.4 L2.2 6.6 H7.5 L8.4 4.4 H15.8 L13.4 11.4 Z" fill="#FAE07E" stroke="#D3953A" stroke-width="1.1"/>
<path d="M1.8 2 H5 M9.5 5.6 H14.3 M3 7.8 H6" stroke="#FFF8D8" stroke-width="0.9"/></svg>
<div class="t " style="left:701.7px;top:314px;font-size:12px;line-height:12px;color:#000;">media</div>
<svg class="r" style="left:676px;top:338px;" width="17" height="13" viewBox="0 0 17 13"><path d="M0.6 0.6 H5.4 L6.6 1.8 H13.4 V4.4 H8.4 L7.5 6.6 H2.2 L0.6 11.4 Z" fill="#F6D56F" stroke="#D3953A" stroke-width="1.1"/>
<path d="M0.6 11.4 L2.2 6.6 H7.5 L8.4 4.4 H15.8 L13.4 11.4 Z" fill="#FAE07E" stroke="#D3953A" stroke-width="1.1"/>
<path d="M1.8 2 H5 M9.5 5.6 H14.3 M3 7.8 H6" stroke="#FFF8D8" stroke-width="0.9"/></svg>
<div class="t " style="left:701.7px;top:339px;font-size:12px;line-height:12px;color:#000;">proc</div>
<svg class="r" style="left:676px;top:363px;" width="17" height="13" viewBox="0 0 17 13"><path d="M0.6 0.6 H5.4 L6.6 1.8 H13.4 V4.4 H8.4 L7.5 6.6 H2.2 L0.6 11.4 Z" fill="#F6D56F" stroke="#D3953A" stroke-width="1.1"/>
<path d="M0.6 11.4 L2.2 6.6 H7.5 L8.4 4.4 H15.8 L13.4 11.4 Z" fill="#FAE07E" stroke="#D3953A" stroke-width="1.1"/>
<path d="M1.8 2 H5 M9.5 5.6 H14.3 M3 7.8 H6" stroke="#FFF8D8" stroke-width="0.9"/></svg>
<div class="t " style="left:701.7px;top:364px;font-size:12px;line-height:12px;color:#000;">run</div>
<div class="r" style="left:1258px;top:106px;width:17px;height:272px;background:#EAEAEA;"></div>
<svg class="r" style="left:1262px;top:111px;" width="9" height="9" viewBox="0 0 9 9"><path d="M4.5 8.5 V1.5 M1 5 L4.5 1.5 L8 5" fill="none" stroke="#BEBEBE" stroke-width="1.2"/></svg>
<svg class="r" style="left:1262px;top:364px;" width="9" height="9" viewBox="0 0 9 9"><path d="M4.5 0.5 V7.5 M1 4 L4.5 7.5 L8 4" fill="none" stroke="#BEBEBE" stroke-width="1.2"/></svg>
<div class="r" style="left:643px;top:378px;width:632px;height:5px;background:#EEEEEE;"></div>
<div class="r" style="left:643px;top:383px;width:632px;height:1px;background:#000;"></div>
<div class="t " style="left:652.5px;top:390px;font-size:12px;line-height:12px;color:#000;transform:scaleX(0.9549);transform-origin:0 0;-webkit-text-stroke:0.4px #000;">DATEINAME</div>
<div class="t " style="left:833px;top:390px;font-size:12px;line-height:12px;color:#000;transform:scaleX(0.8883);transform-origin:0 0;-webkit-text-stroke:0.4px #000;">DATEIGRÖßE</div>
<div class="t " style="left:918px;top:390px;font-size:12px;line-height:12px;color:#000;transform:scaleX(0.8998);transform-origin:0 0;-webkit-text-stroke:0.4px #000;">DATEITYP</div>
<div class="t " style="left:1018px;top:390px;font-size:12px;line-height:12px;color:#000;transform:scaleX(0.9080);transform-origin:0 0;-webkit-text-stroke:0.4px #000;">ZULETZT GEÄNDERT</div>
<div class="t " style="left:1148px;top:390px;font-size:12px;line-height:12px;color:#000;transform:scaleX(0.8999);transform-origin:0 0;-webkit-text-stroke:0.4px #000;">BERECHTIGUNGEN</div>
<div class="r" style="left:824px;top:384px;width:1px;height:22px;background:#D5D5D5;"></div>
<div class="r" style="left:909px;top:384px;width:1px;height:22px;background:#D5D5D5;"></div>
<div class="r" style="left:1009px;top:384px;width:1px;height:22px;background:#D5D5D5;"></div>
<div class="r" style="left:1139px;top:384px;width:1px;height:22px;background:#D5D5D5;"></div>
<div class="r" style="left:1258px;top:384px;width:17px;height:162px;background:#DDDDDD;"></div>
<svg class="r" style="left:1262px;top:389px;" width="9" height="9" viewBox="0 0 9 9"><path d="M4.5 8.5 V1.5 M1 5 L4.5 1.5 L8 5" fill="none" stroke="#A8A8A8" stroke-width="1.2"/></svg>
<div class="r" style="left:1258px;top:652px;width:17px;height:17px;background:#DDDDDD;"></div>
<svg class="r" style="left:1262px;top:656px;" width="9" height="9" viewBox="0 0 9 9"><path d="M4.5 0.5 V7.5 M1 4 L4.5 7.5 L8 4" fill="none" stroke="#A8A8A8" stroke-width="1.2"/></svg>
<div class="r" style="left:643px;top:406px;width:615px;height:263px;overflow:hidden;">
<div class="t " style="left:6px;top:10px;font-size:12px;line-height:12px;color:#000;">autofs</div>
<div class="t " style="left:240.0px;top:10px;font-size:12px;line-height:12px;color:#000;">0 B</div>
<svg class="r" style="left:271px;top:7px;" width="15" height="16" viewBox="0 0 15 16"><path d="M8.5 0 H13.8 V2.4 H7 Q7 0 8.5 0 Z" fill="#2196F3"/><rect x="0" y="3.6" width="15" height="12.4" fill="#2196F3"/></svg>
<div class="t " style="left:290px;top:10px;font-size:12px;line-height:12px;color:#000;">Directory</div>
<div class="r" style="left:371px;top:3px;width:119px;height:25px;overflow:hidden;">
<div class="t " style="left:0px;top:7px;font-size:12px;line-height:12px;color:#000;">7/13/2016 6:21:00 PM</div>
</div>
<div class="t " style="left:500.5px;top:10px;font-size:12px;line-height:12px;color:#000;">drwxr-xr-x</div>
<div class="t " style="left:6px;top:35px;font-size:12px;line-height:12px;color:#000;">bin</div>
<div class="t " style="left:215.3px;top:35px;font-size:12px;line-height:12px;color:#000;">5,56 KB</div>
<svg class="r" style="left:271px;top:32px;" width="15" height="16" viewBox="0 0 15 16"><path d="M8.5 0 H13.8 V2.4 H7 Q7 0 8.5 0 Z" fill="#2196F3"/><rect x="0" y="3.6" width="15" height="12.4" fill="#2196F3"/></svg>
<div class="t " style="left:290px;top:35px;font-size:12px;line-height:12px;color:#000;">Directory</div>
<div class="r" style="left:371px;top:28px;width:119px;height:25px;overflow:hidden;">
<div class="t " style="left:0px;top:7px;font-size:12px;line-height:12px;color:#000;">5/16/2016 6:53:00 PM</div>
</div>
<div class="t " style="left:500.5px;top:35px;font-size:12px;line-height:12px;color:#000;">drwxr-xr-x</div>
<div class="t " style="left:6px;top:60px;font-size:12px;line-height:12px;color:#000;">boot</div>
<div class="t " style="left:226.6px;top:60px;font-size:12px;line-height:12px;color:#000;">608 B</div>
<svg class="r" style="left:271px;top:57px;" width="15" height="16" viewBox="0 0 15 16"><path d="M8.5 0 H13.8 V2.4 H7 Q7 0 8.5 0 Z" fill="#2196F3"/><rect x="0" y="3.6" width="15" height="12.4" fill="#2196F3"/></svg>
<div class="t " style="left:290px;top:60px;font-size:12px;line-height:12px;color:#000;">Directory</div>
<div class="r" style="left:371px;top:53px;width:119px;height:25px;overflow:hidden;">
<div class="t " style="left:0px;top:7px;font-size:12px;line-height:12px;color:#000;">10/25/2015 12:00:00 AM</div>
</div>
<div class="t " style="left:500.5px;top:60px;font-size:12px;line-height:12px;color:#000;">drwxr-xr-x</div>
<div class="t " style="left:6px;top:85px;font-size:12px;line-height:12px;color:#000;">dev</div>
<div class="t " style="left:215.3px;top:85px;font-size:12px;line-height:12px;color:#000;">2,54 KB</div>
<svg class="r" style="left:271px;top:82px;" width="15" height="16" viewBox="0 0 15 16"><path d="M8.5 0 H13.8 V2.4 H7 Q7 0 8.5 0 Z" fill="#2196F3"/><rect x="0" y="3.6" width="15" height="12.4" fill="#2196F3"/></svg>
<div class="t " style="left:290px;top:85px;font-size:12px;line-height:12px;color:#000;">Directory</div>
<div class="r" style="left:371px;top:78px;width:119px;height:25px;overflow:hidden;">
<div class="t " style="left:0px;top:7px;font-size:12px;line-height:12px;color:#000;">1/1/1970 12:00:00 AM</div>
</div>
<div class="t " style="left:500.5px;top:85px;font-size:12px;line-height:12px;color:#000;">drwxr-xr-x</div>
<div class="t " style="left:6px;top:110px;font-size:12px;line-height:12px;color:#000;">etc</div>
<div class="t " style="left:215.3px;top:110px;font-size:12px;line-height:12px;color:#000;">7,41 KB</div>
<svg class="r" style="left:271px;top:107px;" width="15" height="16" viewBox="0 0 15 16"><path d="M8.5 0 H13.8 V2.4 H7 Q7 0 8.5 0 Z" fill="#2196F3"/><rect x="0" y="3.6" width="15" height="12.4" fill="#2196F3"/></svg>
<div class="t " style="left:290px;top:110px;font-size:12px;line-height:12px;color:#000;">Directory</div>
<div class="r" style="left:371px;top:103px;width:119px;height:25px;overflow:hidden;">
<div class="t " style="left:0px;top:7px;font-size:12px;line-height:12px;color:#000;">1/1/1970 12:00:00 AM</div>
</div>
<div class="t " style="left:500.5px;top:110px;font-size:12px;line-height:12px;color:#000;">drwxr-xr-x</div>
<div class="t " style="left:6px;top:135px;font-size:12px;line-height:12px;color:#000;">hdd</div>
<div class="t " style="left:240.0px;top:135px;font-size:12px;line-height:12px;color:#000;">9 B</div>
<svg class="r" style="left:271px;top:132px;" width="16" height="16" viewBox="0 0 16 16"><g fill="none" stroke="#2196F3" stroke-width="2"><rect x="-4.6" y="-2.9" width="9.2" height="5.8" rx="2.9" transform="translate(4.6,11.4) rotate(-45)"/><rect x="-4.6" y="-2.9" width="9.2" height="5.8" rx="2.9" transform="translate(11.4,4.6) rotate(-45)"/></g><path d="M7.7 6.9 L9.1 8.3 M6.9 7.7 L8.3 9.1" stroke="#fff" stroke-width="1.4"/><path d="M5.6 10.4 L10.4 5.6" stroke="#2196F3" stroke-width="2" stroke-linecap="round"/></svg>
<div class="t " style="left:290px;top:135px;font-size:12px;line-height:12px;color:#000;">SymbolicLink</div>
<div class="r" style="left:371px;top:128px;width:119px;height:25px;overflow:hidden;">
<div class="t " style="left:0px;top:7px;font-size:12px;line-height:12px;color:#000;">1/1/1970 12:00:00 AM</div>
</div>
<div class="t " style="left:500.5px;top:135px;font-size:12px;line-height:12px;color:#000;">lrwxrwxrwx</div>
<div class="t " style="left:6px;top:160px;font-size:12px;line-height:12px;color:#000;">home</div>
<div class="t " style="left:226.6px;top:160px;font-size:12px;line-height:12px;color:#000;">224 B</div>
<svg class="r" style="left:271px;top:157px;" width="15" height="16" viewBox="0 0 15 16"><path d="M8.5 0 H13.8 V2.4 H7 Q7 0 8.5 0 Z" fill="#2196F3"/><rect x="0" y="3.6" width="15" height="12.4" fill="#2196F3"/></svg>
<div class="t " style="left:290px;top:160px;font-size:12px;line-height:12px;color:#000;">Directory</div>
<div class="r" style="left:371px;top:153px;width:119px;height:25px;overflow:hidden;">
<div class="t " style="left:0px;top:7px;font-size:12px;line-height:12px;color:#000;">10/25/2015 12:00:00 AM</div>
</div>
<div class="t " style="left:500.5px;top:160px;font-size:12px;line-height:12px;color:#000;">drwxr-xr-x</div>
<div class="t " style="left:6px;top:185px;font-size:12px;line-height:12px;color:#000;">lib</div>
<div class="t " style="left:215.3px;top:185px;font-size:12px;line-height:12px;color:#000;">5,62 KB</div>
<svg class="r" style="left:271px;top:182px;" width="15" height="16" viewBox="0 0 15 16"><path d="M8.5 0 H13.8 V2.4 H7 Q7 0 8.5 0 Z" fill="#2196F3"/><rect x="0" y="3.6" width="15" height="12.4" fill="#2196F3"/></svg>
<div class="t " style="left:290px;top:185px;font-size:12px;line-height:12px;color:#000;">Directory</div>
<div class="r" style="left:371px;top:178px;width:119px;height:25px;overflow:hidden;">
<div class="t " style="left:0px;top:7px;font-size:12px;line-height:12px;color:#000;">10/25/2015 12:00:00 AM</div>
</div>
<div class="t " style="left:500.5px;top:185px;font-size:12px;line-height:12px;color:#000;">drwxr-xr-x</div>
<div class="t " style="left:6px;top:210px;font-size:12px;line-height:12px;color:#000;">media</div>
<div class="t " style="left:226.6px;top:210px;font-size:12px;line-height:12px;color:#000;">352 B</div>
<svg class="r" style="left:271px;top:207px;" width="15" height="16" viewBox="0 0 15 16"><path d="M8.5 0 H13.8 V2.4 H7 Q7 0 8.5 0 Z" fill="#2196F3"/><rect x="0" y="3.6" width="15" height="12.4" fill="#2196F3"/></svg>
<div class="t " style="left:290px;top:210px;font-size:12px;line-height:12px;color:#000;">Directory</div>
<div class="r" style="left:371px;top:203px;width:119px;height:25px;overflow:hidden;">
<div class="t " style="left:0px;top:7px;font-size:12px;line-height:12px;color:#000;">10/25/2015 12:00:00 AM</div>
</div>
<div class="t " style="left:500.5px;top:210px;font-size:12px;line-height:12px;color:#000;">drwxr-xr-x</div>
<div class="t " style="left:6px;top:235px;font-size:12px;line-height:12px;color:#000;">mnt</div>
<div class="t " style="left:240.0px;top:235px;font-size:12px;line-height:12px;color:#000;">5 B</div>
<svg class="r" style="left:271px;top:232px;" width="16" height="16" viewBox="0 0 16 16"><g fill="none" stroke="#2196F3" stroke-width="2"><rect x="-4.6" y="-2.9" width="9.2" height="5.8" rx="2.9" transform="translate(4.6,11.4) rotate(-45)"/><rect x="-4.6" y="-2.9" width="9.2" height="5.8" rx="2.9" transform="translate(11.4,4.6) rotate(-45)"/></g><path d="M7.7 6.9 L9.1 8.3 M6.9 7.7 L8.3 9.1" stroke="#fff" stroke-width="1.4"/><path d="M5.6 10.4 L10.4 5.6" stroke="#2196F3" stroke-width="2" stroke-linecap="round"/></svg>
<div class="t " style="left:290px;top:235px;font-size:12px;line-height:12px;color:#000;">SymbolicLink</div>
<div class="r" style="left:371px;top:228px;width:119px;height:25px;overflow:hidden;">
<div class="t " style="left:0px;top:7px;font-size:12px;line-height:12px;color:#000;">1/1/1970 12:00:00 AM</div>
</div>
<div class="t " style="left:500.5px;top:235px;font-size:12px;line-height:12px;color:#000;">lrwxrwxrwx</div>
<div class="t " style="left:6px;top:260px;font-size:12px;line-height:12px;color:#000;">proc</div>
<div class="t " style="left:240.0px;top:260px;font-size:12px;line-height:12px;color:#000;">0 B</div>
<svg class="r" style="left:271px;top:257px;" width="15" height="16" viewBox="0 0 15 16"><path d="M8.5 0 H13.8 V2.4 H7 Q7 0 8.5 0 Z" fill="#2196F3"/><rect x="0" y="3.6" width="15" height="12.4" fill="#2196F3"/></svg>
<div class="t " style="left:290px;top:260px;font-size:12px;line-height:12px;color:#000;">Directory</div>
<div class="r" style="left:371px;top:253px;width:119px;height:25px;overflow:hidden;">
<div class="t " style="left:0px;top:7px;font-size:12px;line-height:12px;color:#000;">1/1/1970 12:00:00 AM</div>
</div>
<div class="t " style="left:500.5px;top:260px;font-size:12px;line-height:12px;color:#000;">drwxr-xr-x</div>
</div>
<div class="r" style="left:643px;top:669px;width:615px;height:17px;background:#DDDDDD;"></div>
<div class="r" style="left:1145px;top:669px;width:96px;height:17px;background:#fff;"></div>
<svg class="r" style="left:648px;top:673px;" width="10" height="9" viewBox="0 0 10 9"><path d="M9 4.5 H1.5 M5 1 L1.5 4.5 L5 8" fill="none" stroke="#A0A0A0" stroke-width="1.2"/></svg>
<svg class="r" style="left:1245px;top:673px;" width="10" height="9" viewBox="0 0 10 9"><path d="M1 4.5 H8.5 M5 1 L8.5 4.5 L5 8" fill="none" stroke="#A0A0A0" stroke-width="1.2"/></svg>
<div class="r" style="left:643px;top:686px;width:632px;height:5px;background:#EEEEEE;"></div>
<div class="r" style="left:643px;top:691px;width:632px;height:186px;background:#fff;box-sizing:border-box;border:1px solid #CACACA;"></div>
<div class="t " style="left:650px;top:694px;font-size:12px;line-height:12px;color:#000;">15:17:45: 220 (vsFTPd 3.0.2)</div>
<div class="t " style="left:650px;top:709px;font-size:12px;line-height:12px;color:#000;">15:17:45: 230 Login successful.</div>
<div class="t " style="left:650px;top:723px;font-size:12px;line-height:12px;color:#000;">15:17:45: 226 Directory send OK.</div>
<div class="t " style="left:650px;top:738px;font-size:12px;line-height:12px;color:#000;">15:17:45: [R] Getting directories and files for ftp://192.168.178.43/</div>
<div class="t " style="left:650px;top:752px;font-size:12px;line-height:12px;color:#000;">15:17:45: 150 Here comes the directory listing.</div>
<div class="t " style="left:951.5px;top:891px;font-size:17px;line-height:17px;color:#000;font-weight:bold;-webkit-text-stroke:0;letter-spacing:-0.104px;">Speed</div>
<svg class="r" style="left:640px;top:905px;" width="640" height="92" viewBox="0 0 640 92">
<g stroke="#C8C8C8" stroke-width="1" stroke-dasharray="1,1">
<line x1="49" y1="19.5" x2="627" y2="19.5"/>
<line x1="49" y1="41.5" x2="627" y2="41.5"/>
<line x1="49" y1="62.5" x2="627" y2="62.5"/>
</g>
<polygon points="318.1,83.9 327.1,37.9 336.4,43.0 346.5,32.6 355.8,24.4 365.1,26.8 374.4,32.4 384.2,39.3 393.0,40.3 402.8,32.6 412.4,23.1 421.6,32.4 431.2,30.5 440.8,39.3 450.3,44.6 459.4,44.1 469.2,32.1 479.3,36.6 488.6,37.4 497.9,12.2 507.2,25.5 517.3,35.0 526.6,27.3 535.9,31.3 545.7,45.4 555.0,31.6 564.8,24.1 574.1,37.9 583.7,42.5 593.0,39.0 602.8,38.5 612.1,45.1 621.4,32.9 621.4,84.0 318.1,84.0" fill="rgba(0,0,255,0.39)"/>
<polyline points="318.1,83.9 327.1,37.9 336.4,43.0 346.5,32.6 355.8,24.4 365.1,26.8 374.4,32.4 384.2,39.3 393.0,40.3 402.8,32.6 412.4,23.1 421.6,32.4 431.2,30.5 440.8,39.3 450.3,44.6 459.4,44.1 469.2,32.1 479.3,36.6 488.6,37.4 497.9,12.2 507.2,25.5 517.3,35.0 526.6,27.3 535.9,31.3 545.7,45.4 555.0,31.6 564.8,24.1 574.1,37.9 583.7,42.5 593.0,39.0 602.8,38.5 612.1,45.1 621.4,32.9" fill="none" stroke="#1010FF" stroke-width="1.25"/>
<rect x="47.5" y="11.5" width="580.0" height="73.0" fill="none" stroke="#000" stroke-width="1.2"/>
<line x1="40" y1="84.5" x2="47" y2="84.5" stroke="#000" stroke-width="1.2"/>
<g stroke="#000" stroke-width="1.2">
<line x1="43" y1="19.5" x2="47" y2="19.5"/>
<line x1="43" y1="41.5" x2="47" y2="41.5"/>
<line x1="43" y1="62.5" x2="47" y2="62.5"/>
</g>
</svg>
<div class="t " style="left:670px;top:984px;font-size:12px;line-height:12px;color:#000;">0</div>
<div class="t" style="left:657px;top:981.5px;font-size:12px;line-height:12px;color:#000;transform-origin:0 0;transform:rotate(-90deg);letter-spacing:-0.3px;">22,99 MB\s</div>
</body></html>
